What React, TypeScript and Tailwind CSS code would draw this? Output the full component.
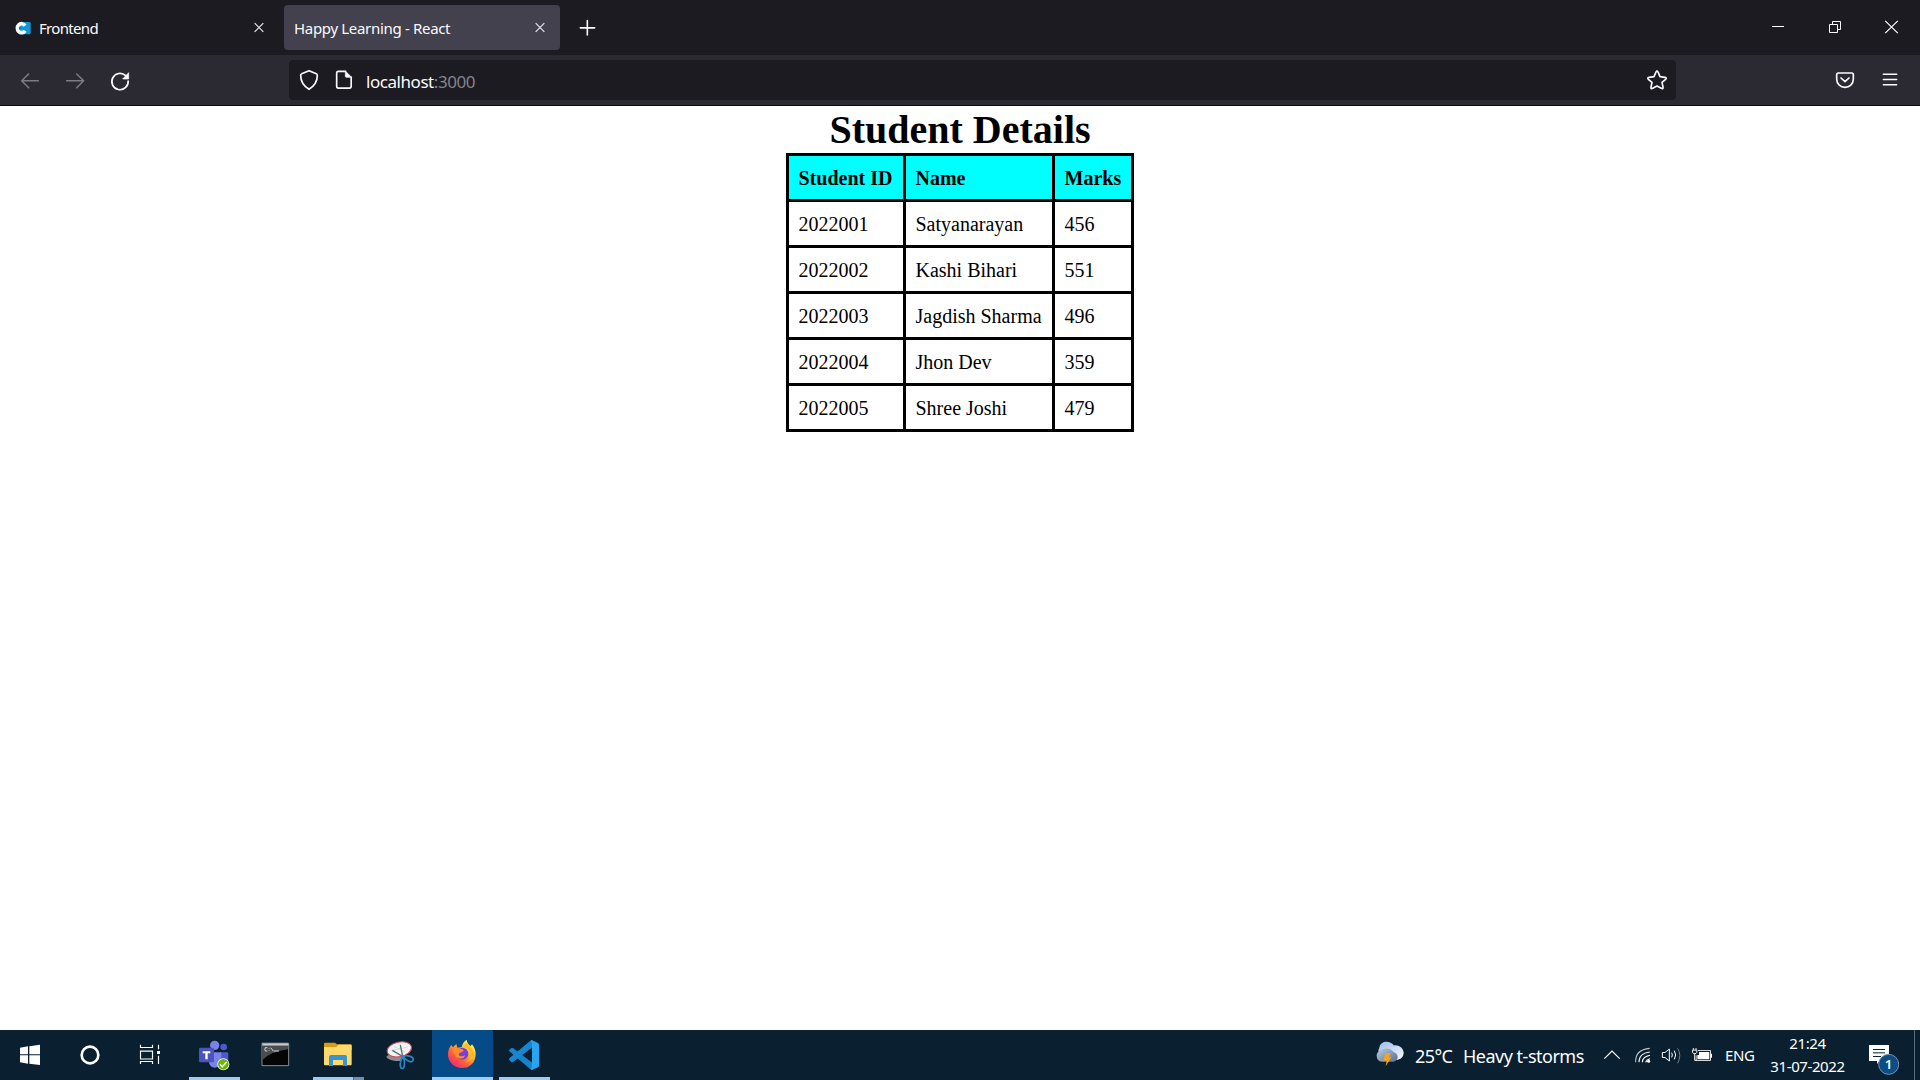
import React from "react";

const students = [
  ["2022001", "Satyanarayan", "456"],
  ["2022002", "Kashi Bihari", "551"],
  ["2022003", "Jagdish Sharma", "496"],
  ["2022004", "Jhon Dev", "359"],
  ["2022005", "Shree Joshi", "479"],
];

type IconProps = { box: string; className: string; children: React.ReactNode };

function Icon({ box, className, children }: IconProps) {
  return (
    <svg viewBox={box} className={"block shrink-0 " + className} fill="none" aria-hidden="true">
      {children}
    </svg>
  );
}

function TabStrip() {
  return (
    <div className="flex h-[55px] items-start bg-[#1c1b22] text-[15px] text-[#fbfbfe]">
      <div className="flex h-[55px] w-[284px] shrink-0 items-center">
        <Icon box="39 0 57 165" className="ml-[13px] h-[55px] w-[19px]">
          <path d="M60 66H88Q92 66 92 70V99Q92 103 88 103H60Z" fill="#1297d4" />
          <path
            d="M75 77A12.500 13.500 0 1 0 75 92"
            stroke="#fff"
            strokeWidth="11"
          />
        </Icon>
        <span className="ml-[7px] mt-[2px] w-[212px] tracking-[-0.68px]">Frontend</span>
        <Icon box="759 0 36 165" className="ml-[2px] h-[55px] w-[12px]">
          <path d="M764 69.500l26 26m0-26l-26 26" stroke="#e2e2e8" strokeWidth="3.800" />
        </Icon>
      </div>
      <div className="mt-[5px] flex h-[45px] w-[276px] shrink-0 items-center rounded-[4px] bg-[#42414d] pl-[10px]">
        <span className="mt-[2px] w-[240px] tracking-[-0.32px]">Happy Learning - React</span>
        <Icon box="792 15 36 135" className="h-[45px] w-[12px]">
          <path d="M797 69.500l26 26m0-26l-26 26" stroke="#e2e2e8" strokeWidth="3.800" />
        </Icon>
      </div>
      <Icon box="921 0 63 165" className="ml-[17px] h-[55px] w-[21px]">
        <path d="M952 62v43M931 83.500h43" stroke="#fbfbfe" strokeWidth="4.800" strokeLinecap="round" />
      </Icon>
      <Icon box="480 0 480 165" className="ml-auto h-[55px] w-[160px]">
        <path d="M516 79.500h36" stroke="#fff" strokeWidth="3" />
        <path d="M688.500 73.500h24v24h-24zM697.500 73V64.500h24v24H713" stroke="#fff" strokeWidth="3" />
        <path d="M855.500 62.500l38 37m0-37l-38 37" stroke="#fff" strokeWidth="3.600" />
      </Icon>
    </div>
  );
}

function Toolbar() {
  return (
    <div className="flex h-[51px] items-center border-b border-[#0c0c0d] bg-[#2b2a33]">
      <Icon box="0 165 867 150" className="h-[50px] w-[289px]">
        <g strokeWidth="4.500" strokeLinecap="round" strokeLinejoin="round">
          <path d="M115 242.500H66M86 222L65 242.500L86 263" stroke="#7d7c84" />
          <path d="M200 242.500H250M230 222L251 242.500L230 263" stroke="#7d7c84" />
        </g>
        <path d="M377 227A24.500 24.500 0 1 0 384.500 243" stroke="#fbfbfe" strokeWidth="5" strokeLinecap="round" />
        <path d="M386 218V237H368Z" fill="#fbfbfe" stroke="#fbfbfe" strokeWidth="2" strokeLinejoin="round" />
      </Icon>
      <div className="flex h-[40px] w-[1387px] shrink-0 items-center rounded-[4px] bg-[#1c1b22]">
        <Icon box="57 180 210 120" className="h-[40px] w-[70px]">
          <path
            d="M117 212L139 221Q142 222 142 226Q142 253 117 268Q92 253 92 226Q92 222 95 221Z"
            stroke="#fbfbfe"
            strokeWidth="5"
            strokeLinejoin="round"
          />
          <path
            d="M227 214H205Q200 214 200 219V259Q200 264.500 205 264.500H238Q243.500 264.500 243.500 259V232"
            stroke="#fbfbfe"
            strokeWidth="5"
            strokeLinecap="round"
          />
          <path d="M226 213L245 232H229Q226 232 226 229Z" fill="#fbfbfe" stroke="#fbfbfe" strokeWidth="2" />
        </Icon>
        <span className="ml-[7px] mt-[4px] text-[17px] tracking-[-0.45px] text-[#fbfbfe]">
          localhost<span className="text-[#85848b]">:3000</span>
        </span>
        <Icon box="129 180 99 120" className="ml-auto h-[40px] w-[33px]">
          <path
            d="M168 216Q171 210 174 216L180 230L195 232Q201 233 197 238L186 247L189 261Q190 268 184 265L171 258L158 265Q152 268 153 261L156 247L145 238Q141 233 147 232L162 230Z"
            stroke="#fbfbfe"
            strokeWidth="5"
            strokeLinejoin="round"
          />
        </Icon>
      </div>
      <Icon box="690 165 270 150" className="ml-auto h-[50px] w-[90px]">
        <path
          d="M715 219H755Q760 219 760 224V237C760 253 748 262 735 262S710 253 710 237V224Q710 219 715 219Z"
          stroke="#fbfbfe"
          strokeWidth="5"
        />
        <path d="M723 234L735 245L747 234" stroke="#fbfbfe" strokeWidth="5" strokeLinecap="round" strokeLinejoin="round" />
        <path d="M850 223H890M850 238.500H890M850 254H890" stroke="#fbfbfe" strokeWidth="4.500" strokeLinecap="round" />
      </Icon>
    </div>
  );
}

function StudentPage() {
  return (
    <main className="flex flex-1 flex-col items-center bg-white font-['Liberation_Serif',serif] text-black">
      <h1 className="h-[47px] whitespace-nowrap text-[40px] font-bold leading-[47px]">Student Details</h1>
      <div className="grid grid-cols-[114px_146px_76px] gap-[3px] bg-black p-[3px] text-[20px]">
        {["Student ID", "Name", "Marks"].map((title) => (
          <div key={title} className="flex h-[43px] items-center whitespace-nowrap bg-[#00ffff] pl-[9.500px] pt-px font-bold">
            {title}
          </div>
        ))}
        {students.flat().map((value) => (
          <div key={value} className="flex h-[43px] items-center whitespace-nowrap bg-white pl-[9.500px] pt-px">
            {value}
          </div>
        ))}
      </div>
    </main>
  );
}

function Taskbar() {
  return (
    <footer className="flex h-[50px] items-stretch bg-[#0a1f30] text-white">
      <Icon box="0 30 180 150" className="h-[50px] w-[60px]">
        <path d="M60 83L84 79V103H60ZM88 78.500L120 74V103H88ZM60 106H84V131L60 127ZM88 106H120V135L88 131Z" fill="#fff" />
      </Icon>
      <Icon box="180 30 180 150" className="h-[50px] w-[60px]">
        <circle cx="270" cy="105" r="25" stroke="#fff" strokeWidth="8" />
      </Icon>
      <Icon box="360 30 189 150" className="h-[50px] w-[63px]">
        <path
          d="M421.500 74V82.500H457.500V74M421.500 93.500H457.500V117H421.500ZM421.500 132V124.500H457.500V132M475.500 74V88M475.500 107V132"
          stroke="#fff"
          strokeWidth="3.500"
        />
        <path d="M471 93H480V102H471Z" fill="#fff" />
      </Icon>

      {/* Microsoft Teams */}
      <Icon box="9 30 186 150" className="h-[50px] w-[62px]">
        <path d="M27 171H180V180H27Z" fill="#a1c9f2" />
        <circle cx="131" cy="81" r="10" fill="#5059c9" />
        <circle cx="104" cy="76" r="14" fill="#7b83eb" />
        <path d="M120 97H142Q145 97 145 101V119Q145 132 132 134H120Z" fill="#5059c9" />
        <path d="M86 97H124V120Q122 142 105 143Q88 142 86 122Z" fill="#7b83eb" />
        <rect x="57" y="83" width="45" height="44" rx="4" fill="#4b53bc" />
        <path d="M68 94H91V99.500H83V118H76V99.500H68Z" fill="#fff" />
        <circle cx="130" cy="133" r="18" fill="#fff" />
        <circle cx="130" cy="133" r="16" fill="#6bb700" />
        <path d="M120 133L127 140L140 126" stroke="#fff" strokeWidth="4.500" />
      </Icon>

      {/* Command prompt */}
      <Icon box="195 30 186 150" className="h-[50px] w-[62px]">
        <path d="M246 69.500H326V137H246Z" fill="#050505" stroke="#a4a9ad" strokeWidth="2.500" />
        <path d="M248 77H324V88Q275 94 248 119Z" fill="#4a4c4e" />
        <path d="M247 70H325V77H247Z" fill="#c8ced2" />
        <path d="M262 83H256Q253 88 256 93H262M267 84V86M267 91V93M272 83L280 93M281 93H297" stroke="#f4f4f4" strokeWidth="2.500" />
      </Icon>

      {/* File explorer */}
      <Icon box="381 30 189 150" className="h-[50px] w-[63px]">
        <path d="M399 171H519V180H399Z" fill="#a1c9f2" />
        <path d="M520 171H552V180H520Z" fill="#7290ad" />
        <path d="M432 71Q432 68 435 68H465L471 73H512Q515 73 515 76V90H432Z" fill="#d99a16" />
        <path d="M432 81H469L475 74H512Q515 74 515 78V133Q515 136 512 136H435Q432 136 432 133Z" fill="#ffd969" />
        <path d="M447 138V111Q447 105 453 105H496Q501 105 501 111V138H489V120H459V138Z" fill="#3b94cf" />
      </Icon>

      {/* Snipping tool */}
      <Icon box="0 30 186 150" className="h-[50px] w-[62px]">
        <path d="M50 108Q72 95 106 108L92 123Q63 124 50 113Z" fill="#8d8d8f" />
        <ellipse cx="88" cy="88" rx="37" ry="22" transform="rotate(-12 88 88)" fill="#f3f5f5" stroke="#d64355" strokeWidth="3" />
        <path d="M61 92L114 81M72 79L105 96" stroke="#c7cccf" strokeWidth="2" />
        <path d="M91 75L98 109M67 91L104 113" stroke="#626a70" strokeWidth="4" />
        <path d="M98 108C91 119 88 139 94 145C104 149 107 128 99 109C111 105 128 108 130 118C130 128 114 129 99 109" stroke="#2787c3" strokeWidth="5" />
      </Icon>

      {/* Firefox */}
      <Icon box="186 30 183 150" className="h-[50px] w-[61px]">
        <defs>
          <linearGradient id="fox" x1="300" y1="70" x2="246" y2="139" gradientUnits="userSpaceOnUse">
            <stop stopColor="#fff044" />
            <stop offset=".34" stopColor="#ffae2d" />
            <stop offset=".62" stopColor="#ff613b" />
            <stop offset="1" stopColor="#f52276" />
          </linearGradient>
        </defs>
        <path d="M186 30H369V180H186Z" fill="#054b87" />
        <path d="M186 171H369V180H186Z" fill="#a1cdf8" />
        <path
          d="M244 75L249 82Q253 77 259 72L262 83L275 82Q277 67 290 59Q291 70 302 78L306 73Q318 88 317 104C316 129 298 144 276 144C252 144 234 127 234 103Q234 87 244 75Z"
          fill="url(#fox)"
        />
        <circle cx="277" cy="101" r="18" fill="#7540df" />
        <path d="M247 83Q255 78 264 84L276 88Q286 91 276 96L268 99L266 106Q274 112 285 106Q282 118 267 115Q251 111 247 83Z" fill="#ff8b29" />
        <path d="M279 82Q302 84 301 104Q299 121 285 126Q309 123 311 102Q311 87 290 70Q282 73 279 82Z" fill="#ffb82f" />
      </Icon>

      {/* Visual Studio Code */}
      <Icon box="369 30 186 150" className="h-[50px] w-[62px]">
        <path d="M387 171H540V180H387Z" fill="#a1c9f2" />
        <path d="M417 91L424 84Q427 82 430 85L487 128V150L483 149L418 94Q416 92 417 91Z" fill="#1684cb" />
        <path d="M417 119L424 126Q427 128 430 125L487 82V60L483 61L418 115Q416 117 417 119Z" fill="#1688d2" />
        <path d="M485 60L504 69Q507 71 507 75V136Q507 140 504 142L485 150Q481 148 486 141V69Q481 62 485 60Z" fill="#27a5f2" />
      </Icon>

      <div className="ml-auto flex w-[550px] items-center whitespace-nowrap text-[18px]">
        <Icon box="30 30 120 150" className="h-[50px] w-[40px]">
          <defs>
            <linearGradient id="cloudBack" x1="80" y1="66" x2="115" y2="122" gradientUnits="userSpaceOnUse">
              <stop stopColor="#a9c7eb" />
              <stop offset="1" stopColor="#f0f5fb" />
            </linearGradient>
            <linearGradient id="cloudFront" x1="65" y1="84" x2="95" y2="126" gradientUnits="userSpaceOnUse">
              <stop stopColor="#b3c2d4" />
              <stop offset="1" stopColor="#657b96" />
            </linearGradient>
          </defs>
          <path d="M58 83C61 62 90 60 101 76C118 74 129 84 131 97C132 111 120 121 107 120H73C58 111 51 95 58 83Z" fill="url(#cloudBack)" />
          <path d="M50 107Q50 96 60 94C68 82 94 83 100 96C118 99 117 124 99 125H66Q50 124 50 107Z" fill="url(#cloudFront)" />
          <path d="M77 99H91L87 112H94L77 139L80 122H69Z" fill="#f6a31d" />
        </Icon>
        <span className="ml-[5px] mt-[2px] w-[48px] tracking-[-0.6px]">25°C</span>
        <span className="mt-[2px] w-[137px] tracking-[-0.5px]">Heavy t-storms</span>
        <Icon box="0 30 360 150" className="h-[50px] w-[120px]">
          <path d="M13 116L36 93L59 116" stroke="#fff" strokeWidth="3.500" />
          <g strokeWidth="3.300">
            <path d="M107 127Q105 89 149 85" stroke="#bcc5cc" />
            <path d="M117 127Q116 100 150 96" stroke="#e4e8eb" />
            <path d="M127 127Q128 110 150 106" stroke="#fff" />
            <path d="M137 127Q139 119 150 116" stroke="#fff" />
          </g>
          <circle cx="146" cy="124" r="4.500" fill="#fff" />
          <path d="M187 97.500H195L208 87V123L195 112.500H187Z" stroke="#fff" strokeWidth="3" />
          <path d="M215 98Q219 105 215 112M223 92Q231 105 223 118" stroke="#fff" strokeWidth="3" />
          <path d="M233 85Q246 105 233 130" stroke="#71808c" strokeWidth="3" />
          <path d="M294 91.500H331.500V121.500H288.500V106" stroke="#fff" strokeWidth="2.500" />
          <path d="M297 96H328V118H292V105H297ZM332 101H336V113H332Z" fill="#fff" />
          <path d="M280 84V90M288 84V90M277.500 90.500H290.500V97Q289 101 284 101Q279 101 277.500 97ZM284 101V121H290" stroke="#fff" strokeWidth="2.800" />
        </Icon>
        <span className="ml-[5px] w-[42px] text-[15px] tracking-[-0.4px]">ENG</span>
        <div className="flex w-[81px] flex-col items-center text-[15px] leading-[23px] tracking-[-0.4px]">
          <span>21:24</span>
          <span>31-07-2022</span>
        </div>
        <Icon box="744 30 216 150" className="h-[50px] w-[72px]">
          <path d="M807 75H867V123H839L831 132V123H807Z" fill="#fff" />
          <path d="M819 88.500H855M819 98.500H855M819 109.500H843" stroke="#0a1f30" strokeWidth="3" />
          <circle cx="866" cy="133" r="30" fill="#0b4d86" stroke="#7791a8" strokeWidth="3" />
          <text x="866" y="147" textAnchor="middle" fontSize="40" fontWeight="600" fill="#fff">1</text>
          <path d="M943.500 30V180" stroke="#5c6b78" strokeWidth="3" />
        </Icon>
      </div>
    </footer>
  );
}

export default function App() {
  return (
    <div className="flex h-[1080px] w-[1920px] flex-col overflow-hidden font-['Noto_Sans',sans-serif]">
      <TabStrip />
      <Toolbar />
      <StudentPage />
      <Taskbar />
    </div>
  );
}
